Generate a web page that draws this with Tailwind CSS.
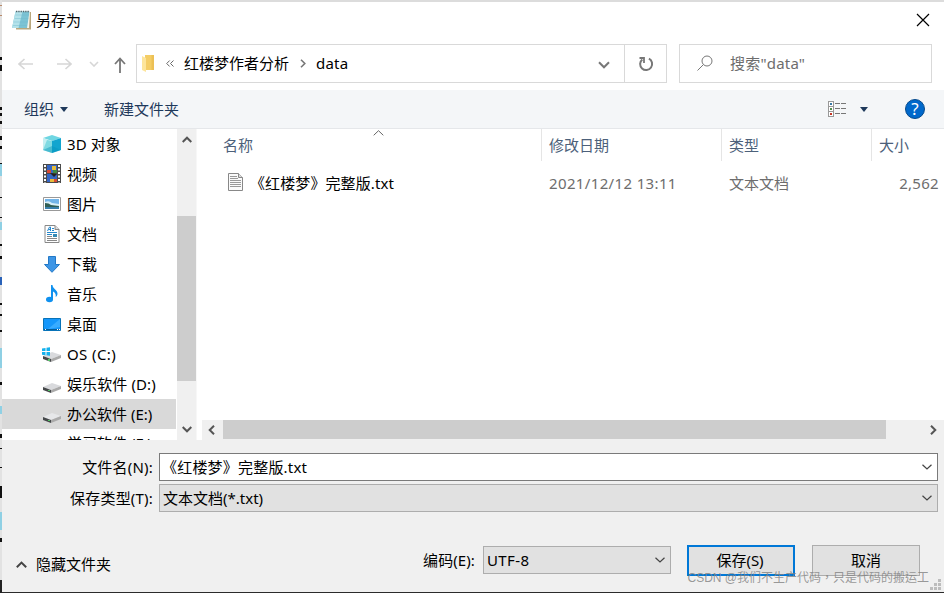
<!DOCTYPE html>
<html lang="zh-CN">

<head>
  <meta charset="UTF-8" />
  <meta name="viewport" content="width=device-width, initial-scale=1.0" />
  <title>另存为</title>
  <script src="https://cdn.jsdelivr.net/npm/@tailwindcss/browser@4"></script>
</head>

<body class="flex h-[593px] w-[944px] overflow-hidden bg-[#dcdcdc] font-['Noto_Sans','Noto_Sans_CJK_SC',sans-serif] text-[15px] leading-5 text-black">
  <!-- window behind the dialog -->
  <svg class="h-[593px] w-[2px] shrink-0" viewBox="0 0 2 593" shape-rendering="crispEdges">
    <rect width="2" height="593" fill="#e2e2e2" />
    <path d="M0 5h2M0 15h2" stroke="#b98a6a" />
    <path d="M0 57h2v3H0zM0 65h2v6H0zM0 107h2v3H0zM0 113h2v3H0zM0 121h2v3H0zM0 136h2v4H0zM0 146h2v3H0zM0 163h2v1H0zM0 197h2v1H0zM0 217h2v1H0zM0 244h2v2H0zM0 256h2v3H0zM0 303h2v2H0zM0 314h2v2H0zM0 330h2v2H0zM0 353h2v1H0zM0 382h2v3H0zM0 413h2v1H0zM0 434h2v4H0zM0 448h2v1H0zM0 467h2v1H0zM0 486h2v12H0zM0 538h2v4H0z" fill="#111" />
    <path d="M0 222h2v8H0zM0 164h2v12H0zM0 348h2v20H0zM0 406h2v8H0zM0 512h2v18H0z" fill="#8fd0e4" />
    <path d="M0 277h2v8H0z" fill="#2a62b8" />
    <path d="M0 580h2v13H0z" fill="#222" />
  </svg>

  <div class="flex h-[593px] min-w-0 flex-1 flex-col border-t-2 border-b border-t-[#dcdcdc] border-b-[#2b2b2b] bg-white">
    <!-- title bar -->
    <div class="flex h-[38px] shrink-0 items-center pb-[2px] pl-[10px]">
      <svg class="size-5" viewBox="0 0 20 20">
        <path d="M4 2h15v17.500H4z" fill="#b9a77d" />
        <path d="M4 2h14l-1 16H3z" fill="#f3f3ea" />
        <path d="M3.500 1.500h14L15 18H0z" fill="#7cc3d4" />
        <path d="M3.500 1.500h7L6.500 18H0z" fill="#b4e2ea" />
        <path d="M3.200 5h13.600M2.500 8.500h13.800M1.800 12h13.800M1 15.500h14" stroke="#6fb8c9" stroke-width=".4" />
        <path d="M4 1.500h13" stroke="#55646a" stroke-width="1.600" stroke-dasharray="1.300 1" />
      </svg>
      <span class="ml-[4px] flex-1">另存为</span>
      <svg class="mr-[14px] size-[14px]" viewBox="0 0 14 14"><path d="M1 1l12 12M13 1L1 13" stroke="#000" stroke-width="1.200" /></svg>
    </div>

    <!-- navigation -->
    <div class="flex h-[50px] shrink-0 items-start pt-1">
      <div class="flex h-[39px] w-[134px] items-center pl-4">
        <svg class="h-3 w-4" viewBox="0 0 16 12" fill="none" stroke="#d6d6d6" stroke-width="1.600"><path d="M15 6H1M6.500 1L1 6l5.500 5" /></svg>
        <svg class="ml-[22px] h-3 w-4" viewBox="0 0 16 12" fill="none" stroke="#d6d6d6" stroke-width="1.600"><path d="M1 6h14M9.500 1L15 6l-5.500 5" /></svg>
        <svg class="ml-[17px] h-[6px] w-[10px]" viewBox="0 0 10 6" fill="none" stroke="#d6d6d6" stroke-width="1.600"><path d="M1 1l4 4 4-4" /></svg>
        <svg class="mt-[3px] ml-[15px] h-4 w-3" viewBox="0 0 12 16" fill="none" stroke="#777" stroke-width="1.800"><path d="M6 16V2M1 7l5-5.500L11 7" /></svg>
      </div>
      <div class="flex h-[39px] w-[531px] border border-[#d9d9d9]">
        <div class="flex flex-1 items-center pl-[5px]">
          <svg class="h-[17px] w-3" viewBox="0 0 12 17">
            <path d="M3 0h9v15H3z" fill="#f4cd66" />
            <path d="M9.500 0H12v15H9.500z" fill="#ecc055" />
            <path d="M0 1l4 2v14l-4-2z" fill="#fde59b" />
          </svg>
          <svg class="ml-3 h-[7px] w-2" viewBox="0 0 8 7" fill="none" stroke="#666"><path d="M3.700.5l-3 3 3 3M7.500.5l-3 3 3 3" /></svg>
          <span class="mb-[2px] ml-[10px]">红楼梦作者分析</span>
          <svg class="ml-[11px] h-[9px] w-[6px]" viewBox="0 0 6 9" fill="none" stroke="#777" stroke-width="1.600"><path d="M1 .7l3.800 3.800L1 8.300" /></svg>
          <span class="mb-[2px] ml-[10px] flex-1 tracking-[0.2px]">data</span>
          <svg class="mt-[2px] mr-[14px] h-2 w-3" viewBox="0 0 12 8" fill="none" stroke="#777" stroke-width="2"><path d="M1 1.300l5 5 5-5" /></svg>
        </div>
        <div class="flex w-[42px] items-center justify-center border-l border-[#d9d9d9]">
          <svg class="size-4" viewBox="0 0 16 16" fill="none" stroke="#777" stroke-width="2"><path d="M4.300 3.400a6 6 0 1 0 6.600-.7" /><path d="M1.500 2H6v5" stroke-width="1.800" /></svg>
        </div>
      </div>
      <div class="ml-3 flex h-[39px] w-[253px] items-center border border-[#d9d9d9] pl-[17px] text-[#6d6d6d]">
        <svg class="mb-px size-4" viewBox="0 0 16 16" fill="none" stroke="#777"><circle cx="10" cy="6" r="5" /><path d="M6.400 9.600L.5 15.500" /></svg>
        <span class="mb-[2px] ml-[17px] tracking-[0.2px]">搜索"data"</span>
      </div>
    </div>

    <!-- toolbar -->
    <div class="flex h-[39px] shrink-0 items-center border-b border-[#e5e7ea] bg-[#f4f6f8] pl-[22px] text-[#1e395b]">
      <span>组织</span>
      <svg class="ml-[6px] h-[5px] w-2" viewBox="0 0 8 5"><path d="M0 0h8L4 5z" fill="#1e395b" /></svg>
      <span class="ml-9 flex-1">新建文件夹</span>
      <svg class="h-4 w-[19px]" viewBox="0 0 19 16" shape-rendering="crispEdges">
        <path d="M.5.500h5v15h-5zM.5 5.500h5M.5 10.500h5" fill="#fff" stroke="#999" />
        <path d="M2 2h2v2H2z" fill="#3979a5" />
        <path d="M2 7h2v2H2z" fill="#528b4e" />
        <path d="M2 12h2v2H2z" fill="#c43524" />
        <path d="M7 2.500h5M13 2.500h5M7 7.500h5M13 7.500h5M7 12.500h5M13 12.500h5" stroke="#777" />
      </svg>
      <svg class="ml-[13px] h-[5px] w-2" viewBox="0 0 8 5"><path d="M0 0h8L4 5z" fill="#1e395b" /></svg>
      <div class="mr-[19px] ml-[37px] flex size-5 items-center justify-center rounded-full border border-[#064a8c] bg-[#0068cb] text-[17px] text-white">?</div>
    </div>

    <!-- folders and files -->
    <div class="flex h-[311px] shrink-0">
      <div class="h-full w-[174px] overflow-hidden">
        <div class="flex h-[30px] items-center pl-[41px]">
          <svg class="h-[18px] w-[18px]" viewBox="0 0 18 18"><path d="M0 3l9-3 9 3-9 3z" fill="#6fd6e2" /><path d="M0 3l9 3v12l-9-3z" fill="#c4eff1" /><path d="M4 5l5 1v12l-9-3z" fill="#52ccd8" opacity=".6" /><path d="M18 3L9 6v12l9-3z" fill="#12a5cf" /><path d="M0 15l9-4 9 4-9 3z" fill="#0794ba" opacity=".45" /></svg>
          <span class="mb-px ml-[6px] tracking-[0.1px]">3D 对象</span>
        </div>
        <div class="flex h-[30px] items-center pl-[41px]">
          <svg class="mb-[2px] h-[19px] w-[18px]" viewBox="0 0 18 19"><path d="M0 0h18v19H0z" fill="#4b4b4b" /><path d="M2 1v18M16 1v18" stroke="#fff" stroke-width="2" stroke-dasharray="2 1.500" /><path d="M4 1h10v8H4zM4 10h10v8H4z" fill="#3566c5" /><path d="M4 6h4v3H4zM11 15h3v3h-3z" fill="#d84a35" /><path d="M9 2h4v4H9zM7 15h4v3H7z" fill="#e7bd3b" /><path d="M10 6h4v3h-4z" fill="#3d8a43" /><path d="M7 9l7 1-3 3z" fill="#222" /></svg>
          <span class="mb-px ml-[6px]">视频</span>
        </div>
        <div class="flex h-[30px] items-center pl-[41px]">
          <svg class="h-[14px] w-[18px]" viewBox="0 0 18 14"><path d="M.5.500h17v13H.5z" fill="#fff" stroke="#999" /><path d="M2 2h14v10H2z" fill="#72b4e8" /><path d="M2 5q4-2 7 1l7 1v2H2z" fill="#d8eff8" /><path d="M2 6q4 0 6 2l8 1v2H2z" fill="#315f54" /><path d="M2 10h14v2H2z" fill="#397fab" /></svg>
          <span class="mb-px ml-[6px]">图片</span>
        </div>
        <div class="flex h-[30px] items-center pl-[42px]">
          <svg class="h-[18px] w-4" viewBox="0 0 16 18"><path d="M1 .5h10l4 4v13H1z" fill="#fff" stroke="#888" /><path d="M11 .5v4h4" fill="#ddd" stroke="#888" /><path d="M3.500 6l2-4h1v4M4.500 4.500h2M8 3.500h2M8 5.500h2M3 7.500h10M3 9.500h5" fill="none" stroke="#2788cb" /><path d="M3 11.500h5M3 13.500h10M3 15.500h10" stroke="#888" /><path d="M9 9h4v3H9z" fill="#3589b4" /></svg>
          <span class="ml-[7px]">文档</span>
        </div>
        <div class="flex h-[30px] items-center pl-[42px]">
          <svg class="h-[17px] w-4" viewBox="0 0 16 17"><path d="M4.500.500h7v8h4L8 16.300.5 8.500h4z" fill="#3d96e6" stroke="#2378c6" /></svg>
          <span class="ml-[7px]">下载</span>
        </div>
        <div class="flex h-[30px] items-center pl-[44px]">
          <svg class="h-[18px] w-3" viewBox="0 0 12 18" fill="#1091ef"><ellipse cx="3.500" cy="14.500" rx="3.500" ry="2.700" /><path d="M5 0h1.500c0 4 5.500 5 5 9-.2 1.500-1 2.600-1.800 3 .6-3-.9-4.500-2.700-5.500v8H5z" /></svg>
          <span class="ml-[9px]">音乐</span>
        </div>
        <div class="flex h-[30px] items-center pl-[41px]">
          <svg class="h-[13px] w-[18px]" viewBox="0 0 18 13"><path d="M.5.500h17v12H.5z" fill="#1597fb" stroke="#0873b8" /><path d="M17 1v8L5 11z" fill="#39acff" /><path d="M1 11.500h16" stroke="#075c96" /><path d="M2 11.500h1M14 11.500h1M16 11.500h1" stroke="#fff" /></svg>
          <span class="ml-[6px]">桌面</span>
        </div>
        <div class="flex h-[30px] items-center pl-[40px]">
          <svg class="h-[15px] w-[19px]" viewBox="0 0 19 15"><path d="M1 9l9-4 9 3-10 4z" fill="#d9dadd" /><path d="M1 9l8 3v3l-8-3z" fill="#45484a" /><path d="M9 12l10-4v3l-10 4z" fill="#aaa" /><path d="M6 12h2v2H6z" fill="#53c566" /><path d="M0 1.500l3.500-.5v3H0zM4.500.800L8 .3V4H4.500zM0 5h3.500v3.200L0 7.700zM4.500 5H8v3.800l-3.500-.5z" fill="#14b1ed" /></svg>
          <span class="mb-px ml-[6px] tracking-[0.4px]">OS (C:)</span>
        </div>
        <div class="flex h-[30px] items-center pl-[41px]">
          <svg class="mt-[7px] h-[10px] w-[18px]" viewBox="0 0 18 10"><path d="M0 4l9-4 9 3-10 4z" fill="#d9dadd" /><path d="M0 4l8 3v3L0 7z" fill="#45484a" /><path d="M8 7l10-4v3L8 10z" fill="#aaa" /><path d="M5 7h2v1H5z" fill="#53c566" /></svg>
          <span class="mb-px ml-[6px] tracking-[0.1px]">娱乐软件 (D:)</span>
        </div>
        <div class="flex h-[30px] items-center bg-[#d9d9d9] pl-[41px]">
          <svg class="mt-[7px] h-[10px] w-[18px]" viewBox="0 0 18 10"><path d="M0 4l9-4 9 3-10 4z" fill="#e6e7e9" /><path d="M0 4l8 3v3L0 7z" fill="#45484a" /><path d="M8 7l10-4v3L8 10z" fill="#aaa" /><path d="M5 7h2v1H5z" fill="#53c566" /></svg>
          <span class="mb-px ml-[6px]">办公软件 (E:)</span>
        </div>
        <div class="flex h-[30px] items-center pb-[2px] pl-[65px]">学习软件 (F:)</div>
      </div>

      <!-- sidebar scrollbar -->
      <div class="ml-px flex h-full w-5 flex-col items-center border-r border-[#f7f7f7] bg-[#f0f0f0]">
        <div class="flex h-[87px] items-start pt-[7px]">
          <svg class="h-[7px] w-[10px]" viewBox="0 0 10 7" fill="none" stroke="#555" stroke-width="2"><path d="M.7 6L5 1.700 9.300 6" /></svg>
        </div>
        <div class="h-[165px] w-full bg-[#cdcdcd]"></div>
        <div class="flex flex-1 items-end pb-[7px]">
          <svg class="h-[7px] w-[10px]" viewBox="0 0 10 7" fill="none" stroke="#555" stroke-width="2"><path d="M.7 1L5 5.300 9.300 1" /></svg>
        </div>
      </div>

      <div class="ml-[5px] flex min-w-0 flex-1 flex-col">
        <div class="relative flex h-8 items-center text-[#4c607a]">
          <span class="flex h-full w-[340px] items-center border-r border-[#e5e5e5] pl-[21px]">名称</span>
          <span class="flex h-full w-[180px] items-center border-r border-[#e5e5e5] pl-[7px]">修改日期</span>
          <span class="flex h-full w-[150px] items-center border-r border-[#e5e5e5] pl-[7px]">类型</span>
          <span class="pl-[7px]">大小</span>
          <svg class="absolute top-[1px] left-[171px] h-[6px] w-[11px]" viewBox="0 0 11 6" fill="none" stroke="#666"><path d="M.7 5.300l4.800-4.600 4.800 4.600" /></svg>
        </div>
        <div class="mt-[7px] flex h-[30px] items-center text-[#6d6d6d]">
          <svg class="mb-[2px] ml-[26px] h-[18px] w-[15px]" viewBox="0 0 15 18"><path d="M.5.500h10l4 4v13H.5z" fill="#fafafa" stroke="#888" /><path d="M10.500.500v4h4" fill="#ddd" stroke="#888" /><path d="M2 3.500h7M2 5.500h8M2 7.500h11M2 9.500h11M2 11.500h11M2 13.500h11" stroke="#999" /></svg>
          <span class="ml-[7px] w-[299px] tracking-[0.1px] text-black">《红楼梦》完整版.txt</span>
          <span class="w-[180px] tracking-[0.36px]">2021/12/12 13:11</span>
          <span class="flex-1">文本文档</span>
          <span class="mr-[5px] tracking-[0.3px]">2,562</span>
        </div>
        <div class="flex-1"></div>
        <div class="flex h-5 items-center bg-[#f0f0f0]">
          <div class="flex w-[21px] justify-center pr-[2px]">
            <svg class="h-[10px] w-[7px]" viewBox="0 0 7 10" fill="none" stroke="#555" stroke-width="2"><path d="M6 .7L1.700 5 6 9.300" /></svg>
          </div>
          <div class="mb-px h-[19px] w-[663px] bg-[#cdcdcd]"></div>
          <svg class="ml-11 h-[10px] w-[7px]" viewBox="0 0 7 10" fill="none" stroke="#555" stroke-width="2"><path d="M1 .7L5.300 5 1 9.300" /></svg>
        </div>
      </div>
    </div>

    <!-- file name, type and buttons -->
    <div class="relative flex-1 bg-[#f0f0f0] pt-[13px]">
      <div class="flex items-center">
        <label class="w-[157px] pr-[6px] text-right tracking-[0.2px]">文件名(N):</label>
        <div class="flex h-7 w-[779px] items-center border border-[#7a7a7a] bg-white pr-[5px] pl-[2px]">
          <span class="mb-px flex-1 tracking-[0.2px]">《红楼梦》完整版.txt</span>
          <svg class="h-[6px] w-[10px]" viewBox="0 0 10 6" fill="none" stroke="#444" stroke-width="1.200"><path d="M.5.700L5 5 9.500.700" /></svg>
        </div>
      </div>
      <div class="mt-[3px] flex items-center">
        <label class="w-[157px] pr-[6px] text-right tracking-[0.2px]">保存类型(T):</label>
        <div class="flex h-7 w-[779px] items-center border border-[#adadad] bg-[#e1e1e1] pr-[5px] pl-[3px]">
          <span class="flex-1">文本文档(*.txt)</span>
          <svg class="h-[6px] w-[10px]" viewBox="0 0 10 6" fill="none" stroke="#444" stroke-width="1.200"><path d="M.5.700L5 5 9.500.700" /></svg>
        </div>
      </div>
      <div class="mt-[33px] flex h-[31px] items-center">
        <svg class="mt-[8px] ml-[14px] h-[7px] w-[11px]" viewBox="0 0 11 7" fill="none" stroke="#444" stroke-width="2"><path d="M.8 6.200l4.700-4.600 4.700 4.600" /></svg>
        <span class="mt-[6px] ml-[9px] flex-1">隐藏文件夹</span>
        <label class="mr-[8px] mb-[2px] tracking-[0.1px]">编码(E):</label>
        <div class="mb-px flex h-7 w-[188px] items-center border border-[#adadad] bg-[#e1e1e1] pr-[5px] pl-[3px]">
          <span class="flex-1 tracking-[0.4px]">UTF-8</span>
          <svg class="h-[6px] w-[10px]" viewBox="0 0 10 6" fill="none" stroke="#444" stroke-width="1.200"><path d="M.5.700L5 5 9.500.700" /></svg>
        </div>
        <button class="ml-4 h-[31px] w-[108px] border-2 border-[#0078d7] bg-[#e1e1e1] pr-[2px] pb-[2px]">保存(S)</button>
        <button class="mr-6 ml-[17px] h-[31px] w-[108px] border border-[#adadad] bg-[#e1e1e1] pb-[2px]">取消</button>
      </div>
      <svg class="absolute right-[3px] bottom-[2px] size-[11px]" viewBox="0 0 11 11" fill="#bdbdbd" shape-rendering="crispEdges"><path d="M8 0h3v3H8zM4 4h3v3H4zM8 4h3v3H8zM0 8h3v3H0zM4 8h3v3H4zM8 8h3v3H8z" /></svg>
      <div class="absolute right-[15px] bottom-[4px] font-['Liberation_Sans','Noto_Sans_CJK_TC',sans-serif] text-[12px] leading-5 whitespace-nowrap text-[#808080]/80" lang="zh-TW">CSDN @我们不生产代码，只是代码的搬运工</div>
    </div>
  </div>
</body>

</html>
